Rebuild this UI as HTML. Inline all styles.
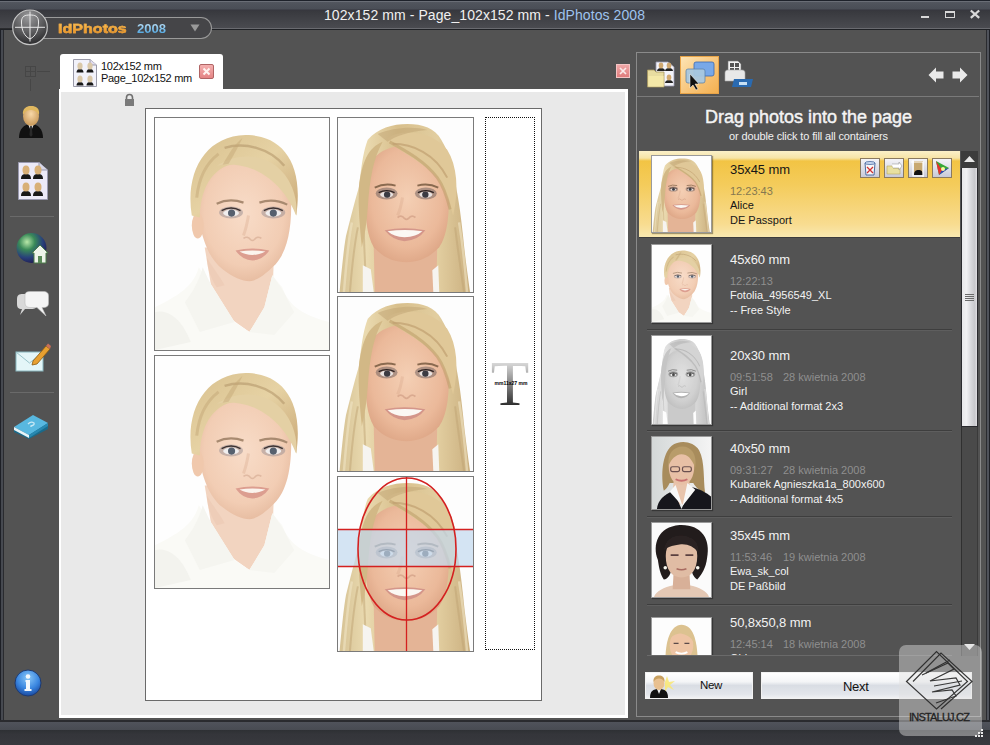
<!DOCTYPE html>
<html><head><meta charset="utf-8">
<style>
*{margin:0;padding:0;box-sizing:border-box}
html,body{width:990px;height:745px;overflow:hidden;background:#535353;font-family:"Liberation Sans",sans-serif}
.a{position:absolute}
svg{position:absolute;overflow:visible}
#title{left:0;top:0;width:990px;height:30px;background:linear-gradient(#1e222a 0,#1e222a 1px,#6a6e76 1px,#6a6e76 2px,#52565e 2px,#4e525a 5px,#4a4e56 9px,#36363e 10px,#38393e 11px,#4a4b50 28px,#6a6b70 28px,#6a6b70 29px,#202226 29px,#202226 30px)}
#titleline{display:none}
#lframe{left:0;top:30px;width:4px;height:715px;background:linear-gradient(90deg,#1e2026 0,#1e2026 1px,#464950 1px,#464950 3px,#2a2b2f 3px)}
#rframe{left:986px;top:30px;width:4px;height:715px;background:linear-gradient(90deg,#2a2b2f 0,#2a2b2f 1px,#50535b 1px,#50535b 3px,#1e2026 3px)}
#status{left:0;top:720px;width:990px;height:25px;background:linear-gradient(#2a2b2f 0,#2a2b2f 2px,#50535b 2px,#4c4f57 6px,#484b52 10px,#2e3034 10px,#34353a 14px,#38393e 25px)}
.ttl{left:324px;top:7px;font-size:14px;color:#f0f0f0;white-space:nowrap;letter-spacing:0.08px}
.sep{height:1px;background:#6a6a6a}
.tabt{font-size:11px;color:#111;white-space:nowrap;letter-spacing:-0.3px;line-height:14px}
.photo{background:#fff;border:1px solid #7a7a7a;overflow:hidden}
.item{left:647px;width:305px}
.th{left:652px;width:60px;border:1px solid #9a9a9a;background:#fff;overflow:hidden;box-shadow:1px 1px 1px rgba(0,0,0,.35)}
.t1{font-size:13px;color:#f2f2f2;white-space:nowrap;letter-spacing:-0.1px}
.t2{font-size:11px;color:#8f8f8f;white-space:nowrap}
.t3{font-size:11px;color:#f2f2f2;white-space:nowrap}
.isep{left:647px;width:305px;height:1px;background:#3e3e3e;box-shadow:0 1px 0 #5e5e5e}
.btn{border:1px solid #f2f2f2;background:linear-gradient(#ffffff 0,#f4f5f7 35%,#d9dde4 50%,#e3e6eb 85%,#f0f1f3 100%);font-size:13px;color:#111;text-align:center}
</style></head>
<body>
<svg width="0" height="0" style="position:absolute;left:0;top:0">
<defs>
<linearGradient id="hairC" x1="0" y1="0" x2="1" y2="0">
<stop offset="0" stop-color="#d6c294"/><stop offset="0.2" stop-color="#eadab0"/><stop offset="0.45" stop-color="#d8bf8c"/><stop offset="0.75" stop-color="#e2cea0"/><stop offset="1" stop-color="#cbb080"/>
</linearGradient>
<radialGradient id="skinC" cx="0.5" cy="0.45" r="0.6">
<stop offset="0" stop-color="#f4cfb4"/><stop offset="0.7" stop-color="#ebb99a"/><stop offset="1" stop-color="#dca484"/>
</radialGradient>
<radialGradient id="skinA" cx="0.5" cy="0.45" r="0.6">
<stop offset="0" stop-color="#f8dcc8"/><stop offset="0.7" stop-color="#f2cdb4"/><stop offset="1" stop-color="#e4b89c"/>
</radialGradient>
<linearGradient id="hairA" x1="0" y1="0" x2="1" y2="1">
<stop offset="0" stop-color="#d8c08e"/><stop offset="0.5" stop-color="#e6d2a4"/><stop offset="1" stop-color="#c8a674"/>
</linearGradient>
<symbol id="fC" viewBox="0 0 136 175" preserveAspectRatio="none">
<rect width="136" height="175" fill="#fdfdfd"/>
<g filter="url(#soft)">
<path d="M1.6,175 C4,150 6,130 8,119 C14,95 18,80 21,70 C24,45 26,32 30,22 C40,10 55,6 70,6 C85,6 98,10 104,22 C112,35 116,50 119,70 C122,85 124,100 126,119 C128,140 131,160 133,175 Z" fill="url(#hairC)"/>
<path d="M12,175 C14,150 16,130 20,110 M118,110 C121,135 124,155 127,175 M28,175 C28,150 26,130 26,110" stroke="#c0a474" stroke-width="2" fill="none" opacity="0.5"/><path d="M6,175 C8,150 10,125 14,105 M130,175 C128,150 126,130 122,105" stroke="#f0e4c4" stroke-width="2.5" fill="none" opacity="0.6"/>
<path d="M36,128 L100,128 L99,175 L37,175 Z" fill="#e4b496"/>
<path d="M25,148 L33,152 L36,175 L25,175 Z" fill="#f6f4f0"/>
<path d="M101,148 L95,153 L96,175 L102,175 Z" fill="#f6f4f0"/>
<path d="M27,70 C27,40 45,28 69,28 C95,28 112,42 112,72 C112,100 110,118 102,130 C92,141 80,145 69,145 C57,145 46,141 36,130 C29,118 27,100 27,70 Z" fill="url(#skinC)"/>
<path d="M21,70 C24,45 30,30 45,24 C36,40 32,60 30,90 C29,105 27,118 24,130 C22,110 20,90 21,70 Z" fill="#d2b886"/>
<path d="M50,20 C66,10 96,14 110,32 C120,48 122,72 116,98 C112,84 108,72 100,60 C90,48 74,40 50,24 Z" fill="#e0c898"/>
<path d="M52,24 C70,34 88,44 100,60 C106,68 110,80 113,92" stroke="#bc9c68" stroke-width="3" fill="none" opacity="0.55"/>
<path d="M40,16 C55,10 75,8 90,12 C70,14 58,18 50,24 Z" fill="#c0a474" opacity="0.5"/>
<path d="M55,26 C75,26 98,36 110,60" stroke="#c0a070" stroke-width="2" fill="none" opacity="0.7"/>
<path d="M37,70 Q47,65 58,68" stroke="#8a6a50" stroke-width="1.8" fill="none"/>
<path d="M80,68 Q91,65 101,70" stroke="#8a6a50" stroke-width="1.8" fill="none"/>
<ellipse cx="49" cy="76" rx="11" ry="6" fill="#6a5c5c" opacity="0.5"/>
<ellipse cx="88.5" cy="76" rx="11" ry="6" fill="#6a5c5c" opacity="0.5"/>
<ellipse cx="49" cy="77" rx="6.5" ry="3" fill="#e8e2e0"/>
<ellipse cx="88.5" cy="77" rx="6.5" ry="3" fill="#e8e2e0"/>
<circle cx="49.5" cy="77" r="3.2" fill="#3a3a42"/>
<circle cx="88" cy="77" r="3.2" fill="#3a3a42"/>
<path d="M41,75 Q49,71 57,75 M80.5,75 Q88.5,71 96.5,75" stroke="#2a2020" stroke-width="1.3" fill="none"/>
<path d="M65,80 Q63,92 60,98" stroke="#d09c80" stroke-width="3" fill="none" opacity="0.25"/><path d="M60,100 Q64,97 67,101 Q69,103 71,101 Q74,97 78,100" stroke="#b88068" stroke-width="1.8" fill="none" opacity="0.4"/>
<path d="M47,113 Q67,109 88,113 Q81,123 67,124 Q55,123 47,113 Z" fill="#d4968a"/>
<path d="M50,114 Q67,111.5 85,114 Q79,119.5 67,120 Q56,119.5 50,114 Z" fill="#fbf8f4"/>
</g>
</symbol>
<symbol id="fA" viewBox="0 0 175 233" preserveAspectRatio="none">
<rect width="175" height="233" fill="#fefefe"/>
<g filter="url(#soft)">
<path d="M50,130 L120,130 L118,180 L95,215 L60,190 Z" fill="#f2d4c0"/>
<path d="M44,150 C40,165 30,176 0,190 L0,233 L175,233 L175,205 C150,198 135,190 128,170 L118,158 L110,190 L95,215 L80,205 L55,165 Z" fill="#fafaf6"/>
<path d="M55,165 L48,150 C44,165 36,178 30,185 L45,215 L80,205 Z" fill="#f5f5f0"/>
<path d="M118,158 L128,172 L140,195 L120,218 L95,215 L110,190 Z" fill="#f6f6f1"/>
<path d="M0,195 C12,192 26,200 36,225 L0,233 Z" fill="#f3f3ee"/>
<path d="M42,72 C42,48 62,40 90,40 C118,40 137,52 137,88 C137,120 130,140 118,150 C108,160 100,164 95,164 C88,164 78,160 68,152 C52,140 42,110 42,72 Z" fill="url(#skinA)"/>
<path d="M52,140 C58,150 66,160 70,168 L62,170 C56,160 52,150 52,140 Z" fill="#e8c0a8" opacity="0.35"/>
<ellipse cx="43" cy="108" rx="6" ry="13" fill="#f0c8ac"/>
<path d="M37,98 C30,55 50,18 91,17 C128,17 150,45 142,98 C138,78 128,60 112,50 C100,42 80,44 68,50 C55,58 46,72 45,100 Z" fill="url(#hairA)"/>
<path d="M62,48 C90,30 125,38 138,70 C142,80 143,90 142,98 C135,80 122,62 100,52 C85,46 72,46 62,48 Z" fill="#e4d0a4"/>
<path d="M70,30 C90,24 115,30 130,48" stroke="#b09468" stroke-width="2.5" fill="none" opacity="0.55"/>
<path d="M42,80 C44,60 52,45 64,36" stroke="#c4a878" stroke-width="3" fill="none" opacity="0.5"/>
<path d="M88,20 C80,26 74,36 68,47 L74,46 C80,36 84,28 88,20 Z" fill="#c4a676" opacity="0.45"/>
<path d="M62,86 Q75,80 89,85" stroke="#a88a70" stroke-width="2.2" fill="none"/>
<path d="M105,85 Q119,80 133,87" stroke="#a88a70" stroke-width="2.2" fill="none"/>
<ellipse cx="76.5" cy="95" rx="12" ry="6" fill="#a09496" opacity="0.55"/>
<ellipse cx="119" cy="95" rx="12" ry="6" fill="#a09496" opacity="0.55"/>
<ellipse cx="76.5" cy="95.5" rx="8" ry="3.5" fill="#f0eeee"/>
<ellipse cx="119" cy="95.5" rx="8" ry="3.5" fill="#f0eeee"/>
<circle cx="77" cy="95.5" r="3.6" fill="#56606e"/>
<circle cx="119" cy="95.5" r="3.6" fill="#56606e"/>
<path d="M67,93 Q76.5,88 86,93 M109.5,93 Q119,88 128.5,93" stroke="#3a3030" stroke-width="1.5" fill="none"/>
<path d="M94,98 Q92,110 89,118" stroke="#dcae94" stroke-width="3" fill="none" opacity="0.4"/><path d="M89,121 Q93,118 96,122 Q98,124 100,122 Q103,118 107,121" stroke="#c89880" stroke-width="1.6" fill="none" opacity="0.45"/>
<path d="M81,133 Q98,129 115,133 Q108,143 98,143 Q88,143 81,133 Z" fill="#dc9e90"/>
<path d="M85,134 Q98,132 111,134 Q105,137.5 98,137.5 Q91,137.5 85,134 Z" fill="#fbf4ee"/>
</g>
</symbol>
<symbol id="fCg" viewBox="0 0 136 175" preserveAspectRatio="none">
<g filter="url(#gray)"><use href="#fC" width="136" height="175"/></g>
</symbol>
<filter id="soft" x="-5%" y="-5%" width="110%" height="110%"><feGaussianBlur stdDeviation="0.7"/></filter>
<filter id="gray"><feColorMatrix type="matrix" values="0.32 0.63 0.12 0 0.02  0.32 0.63 0.12 0 0.02  0.32 0.63 0.12 0 0.02  0 0 0 1 0"/></filter>
<linearGradient id="bgG" x1="0" y1="0" x2="1" y2="0"><stop offset="0" stop-color="#d4d8d8"/><stop offset="1" stop-color="#f4f4f4"/></linearGradient>
<symbol id="fG" viewBox="0 0 60 75" preserveAspectRatio="none">
<rect width="60" height="75" fill="url(#bgG)"/>
<g filter="url(#soft)">
<path d="M12,56 C9,40 10,18 20,9 C28,3 42,4 48,14 C54,26 52,44 54,58 C48,56 44,52 42,48 L18,48 C16,52 14,55 12,56 Z" fill="#a88c5c"/>
<path d="M22,46 L38,46 L40,70 L20,70 Z" fill="#e8c4ac"/>
<path d="M5,75 C6,66 12,60 22,56 L30,75 Z M60,75 L60,62 C56,58 48,54 40,52 L30,75 Z" fill="#18181c"/>
<path d="M18,57 L24,50 L31,72 Z M44,55 L36,48 L31,72 Z" fill="#f8f8f8"/>
<path d="M17,30 C17,20 22,14 30,14 C38,14 43,20 43,30 C43,42 38,50 30,50 C22,50 17,42 17,30 Z" fill="#e8c0a6"/>
<path d="M17,30 C15,18 22,10 31,10 C40,10 46,18 44,32 C40,22 36,18 30,18 C24,18 19,24 17,30 Z" fill="#b89c6a"/>
<rect x="19" y="31" width="9" height="5" rx="2" fill="none" stroke="#6a5050" stroke-width="1.2"/>
<rect x="31" y="31" width="9" height="5" rx="2" fill="none" stroke="#6a5050" stroke-width="1.2"/>
<path d="M24,44 Q30,47 36,44" stroke="#c87070" stroke-width="2" fill="none"/>
</g>
</symbol>
<symbol id="fE" viewBox="0 0 60 76" preserveAspectRatio="none">
<rect width="60" height="76" fill="#fbfbfb"/>
<g filter="url(#soft)">
<path d="M2,76 C4,70 12,66 22,64 L38,64 C48,66 56,70 58,76 Z" fill="#e4c8b4"/>
<path d="M22,50 L38,50 L39,68 L21,68 Z" fill="#d8b098"/>
<path d="M6,38 C0,22 6,4 28,2 C50,1 60,16 56,36 C55,46 50,54 46,58 C42,56 40,50 40,45 L20,45 C20,52 16,58 12,58 C8,52 7,45 6,38 Z" fill="#221c1c"/>
<path d="M14,34 C14,22 20,18 30,18 C40,18 46,22 46,34 C46,48 40,56 30,56 C20,56 14,48 14,34 Z" fill="#e0bca4"/>
<path d="M12,28 C14,16 22,12 32,13 C42,14 48,20 47,30 C42,24 36,21 28,22 C20,23 15,25 12,28 Z" fill="#2a2222"/>
<path d="M19,33 L27,33 M34,33 L42,33" stroke="#5a4040" stroke-width="1.6"/>
<path d="M25,47 Q30,49 35,47" stroke="#a86a60" stroke-width="1.6" fill="none"/>
<circle cx="13.5" cy="46" r="1.8" fill="#f8f8f0"/><circle cx="46.5" cy="46" r="1.8" fill="#f8f8f0"/>
</g>
</symbol>
<symbol id="fB" viewBox="0 0 60 83" preserveAspectRatio="none">
<rect width="60" height="83" fill="#fdfdfd"/>
<g filter="url(#soft)">
<path d="M14,60 C12,30 16,8 30,7 C44,7 48,30 46,60 Z" fill="#dcc290"/>
<ellipse cx="30" cy="28" rx="12" ry="16" fill="#eec4a4"/>
<path d="M18,22 C18,12 24,9 30,9 C38,9 42,13 42,24 C38,18 32,16 28,16 C22,17 19,20 18,22 Z" fill="#dcc290"/>
<path d="M24,35 Q30,38 36,35" stroke="#fff" stroke-width="2" fill="none"/>
<path d="M22,26 L27,26 M33,26 L38,26" stroke="#5a4a4a" stroke-width="1.5"/>
</g>
</symbol>
</defs>
</svg>
<div id="title" class="a"></div>
<div id="titleline" class="a"></div>
<div class="a ttl">102x152 mm - Page_102x152 mm - <span style="color:#9ec3ee">IdPhotos 2008</span></div>
<div id="lframe" class="a"></div>
<div id="rframe" class="a"></div>
<div id="status" class="a"></div>

<!-- logo pill -->
<div class="a" style="left:28px;top:17px;width:184px;height:22px;border:1.5px solid #9a9a9a;border-radius:0 11px 11px 0;border-left:none;background:#454548"></div>
<div class="a" style="left:0;top:28px;width:14px;height:1px;background:#2a2b2e"></div>
<div class="a" style="left:58px;top:21.5px;font-size:12px;font-weight:bold;white-space:nowrap;transform:scaleX(1.34);transform-origin:0 0;background:linear-gradient(#f8c860 0,#f0a030 60%,#e89028 100%);-webkit-background-clip:text;-webkit-text-fill-color:transparent;-webkit-text-stroke:0.4px #e8a040">IdPhotos</div>
<div class="a" style="left:136.5px;top:21.5px;font-size:12px;font-weight:bold;white-space:nowrap;transform:scaleX(1.09);transform-origin:0 0;background:linear-gradient(#c8e8fc 0,#70b8e8 60%,#3898d8 100%);-webkit-background-clip:text;-webkit-text-fill-color:transparent">2008</div>
<svg style="left:190px;top:24px" width="10" height="8"><path d="M0.5,0.5 L9.5,0.5 L5,7.5 Z" fill="#9a9a9a"/></svg>
<svg style="left:11px;top:9px" width="38" height="38" viewBox="0 0 38 38">
<defs><radialGradient id="lg" cx="0.45" cy="0.2" r="0.85"><stop offset="0" stop-color="#9a9a9c"/><stop offset="0.55" stop-color="#5a5a5c"/><stop offset="1" stop-color="#262628"/></radialGradient></defs>
<circle cx="19" cy="18.3" r="17.3" fill="url(#lg)" stroke="#c4c4c4" stroke-width="1.2"/>
<path d="M10.5,13 C10.5,7 14,6 19,6 C24,6 27.5,7 27.5,13 C27.5,21 25,27 19,30 C13,27 10.5,21 10.5,13 Z" fill="none" stroke="#e8e8e8" stroke-width="1"/>
<line x1="19" y1="2.5" x2="19" y2="32.5" stroke="#e8e8e8" stroke-width="1"/>
<line x1="4" y1="18.3" x2="34" y2="18.3" stroke="#e8e8e8" stroke-width="1"/>
</svg>
<!-- title buttons -->
<div class="a" style="left:921px;top:16px;width:8px;height:2px;background:#d8d8d8"></div>
<div class="a" style="left:945px;top:11px;width:10px;height:7px;border:1px solid #d8d8d8;border-top-width:2px"></div>
<svg style="left:969px;top:9px" width="12" height="10"><path d="M1.8,1.5 L10.2,8.8 M10.2,1.5 L1.8,8.8" stroke="#d8d8d8" stroke-width="2.3"/></svg>

<!-- left toolbar -->
<svg style="left:22px;top:62px" width="30" height="30"><g stroke="#464646" stroke-width="1" fill="none"><rect x="3.5" y="4.5" width="10" height="10"/><line x1="8.5" y1="4.5" x2="8.5" y2="14.5"/><line x1="3.5" y1="9.5" x2="13.5" y2="9.5"/><line x1="15" y1="9.5" x2="28" y2="9.5"/><line x1="8.5" y1="17" x2="8.5" y2="29"/></g></svg>
<svg style="left:18px;top:105px" width="26" height="34" viewBox="0 0 26 34">
<defs><radialGradient id="ph" cx="0.5" cy="0.4" r="0.6"><stop offset="0" stop-color="#f8d8a8"/><stop offset="1" stop-color="#c89858"/></radialGradient></defs>
<path d="M1,33 C1,24 6,19 13,19 C20,19 25,24 25,33 Z" fill="#111"/>
<path d="M10,19 L13,26 L16,19 Z" fill="#e8e8e8"/><path d="M12.2,21 L13.8,21 L14.5,30 L13,32 L11.5,30 Z" fill="#2a2a2a"/>
<ellipse cx="13" cy="11" rx="8" ry="10" fill="url(#ph)"/>
<path d="M5,10 C4,3 9,1 13,1 C18,1 22,3 21,10 C19,6 15,5 13,5 C10,5 7,6 5,10 Z" fill="#e0b860"/>
</svg>
<svg style="left:18px;top:162px" width="30" height="38" viewBox="0 0 30 38">
<path d="M0.5,0.5 L21,0.5 L29.5,8 L29.5,37.5 L0.5,37.5 Z" fill="#eceaf8" stroke="#9a9ab0"/>
<path d="M21,0.5 L21,8 L29.5,8" fill="#d8d8e8" stroke="#9a9ab0"/>
<g id="mp"><path d="M3,17 C3,13 5,12 8,12 C11,12 13,13 13,17 Z" fill="#181818"/><ellipse cx="8" cy="8" rx="3.5" ry="4.5" fill="#d8b078"/></g>
<use href="#mp" x="12"/><use href="#mp" y="17"/><use href="#mp" x="12" y="17"/>
</svg>
<div class="a" style="left:10px;top:216px;width:44px;height:1px;background:#6a6a6a"></div>
<svg style="left:16px;top:233px" width="34" height="32" viewBox="0 0 34 32">
<defs><radialGradient id="gl" cx="0.35" cy="0.3" r="0.75"><stop offset="0" stop-color="#b8e8a8"/><stop offset="0.35" stop-color="#3a8a58"/><stop offset="0.7" stop-color="#28407a"/><stop offset="1" stop-color="#201a50"/></radialGradient></defs>
<circle cx="15.5" cy="15" r="15" fill="url(#gl)"/>
<path d="M16,20 L24,12 L32,20 L30,20 L30,30 L18,30 L18,20 Z" fill="#eef4ea" stroke="#4a7a48" stroke-width="1"/>
<rect x="22" y="23" width="4" height="7" fill="#5a8a58"/>
</svg>
<svg style="left:15px;top:291px" width="34" height="27" viewBox="0 0 34 27">
<path d="M2,8 C2,4 4,3 8,3 L16,3 C20,3 22,5 22,9 L22,13 C22,17 20,18 16,18 L10,18 L5,24 L7,18 C3,18 2,16 2,13 Z" fill="#d8d8d8"/>
<path d="M10,4 C10,1.5 12,0.5 15,0.5 L28,0.5 C32,0.5 33.5,2 33.5,5 L33.5,12 C33.5,15 32,16.5 28,16.5 L27,16.5 L31,25 L22,16.5 L15,16.5 C12,16.5 10,15 10,12 Z" fill="#f4f4f4" stroke="#bcbcbc" stroke-width="0.6"/>
</svg>
<svg style="left:15px;top:343px" width="36" height="30" viewBox="0 0 36 30">
<rect x="1" y="9" width="27" height="19" fill="#e4f6f8" stroke="#8ab8c0" stroke-width="1"/>
<path d="M1,9 L14.5,20 L28,9" fill="none" stroke="#9ac4ca" stroke-width="1"/>
<path d="M18,18 L31,3 L35,6 L22,21 L17,22 Z" fill="#e8a030" stroke="#8a5a10" stroke-width="0.8"/>
<path d="M31,3 L33,0.5 L36,3 L35,6 Z" fill="#c87058"/>
</svg>
<div class="a" style="left:10px;top:392px;width:44px;height:1px;background:#6a6a6a"></div>
<svg style="left:13px;top:412px" width="36" height="28" viewBox="0 0 36 28">
<path d="M1,17 L20,6 L35,13 L35,17 L16,27 L1,20 Z" fill="#1a6a8a"/>
<path d="M1,15 L20,3 L35,11 L16,23 Z" fill="#58b8e0"/>
<path d="M1,15 L16,23 L16,26 L1,18 Z" fill="#e8f4f8"/>
<path d="M16,23 L35,11 L35,14 L16,26 Z" fill="#2888b0"/>
<path d="M15,12 Q18,9 21,11 Q22,13 18,14 L18,15" stroke="#c8e8f4" stroke-width="1.3" fill="none"/>
</svg>
<svg style="left:14px;top:669px" width="28" height="28" viewBox="0 0 28 28">
<defs><radialGradient id="ig" cx="0.5" cy="0.3" r="0.7"><stop offset="0" stop-color="#8ac8f8"/><stop offset="0.6" stop-color="#3a86e0"/><stop offset="1" stop-color="#1a4aa0"/></radialGradient></defs>
<circle cx="14" cy="14" r="13" fill="url(#ig)" stroke="#1e3a70" stroke-width="1"/>
<circle cx="14" cy="7.5" r="2.3" fill="#f4f8fc"/>
<path d="M11.5,11 L16,11 L16,20 L17.5,20 L17.5,22 L10.5,22 L10.5,20 L12,20 L12,13 L11.5,13 Z" fill="#f4f8fc"/>
</svg>


<!-- canvas -->
<div class="a" style="left:59px;top:89px;width:569px;height:629px;background:#fff"></div>
<div class="a" style="left:61px;top:92px;width:564px;height:623px;background:#e9e9e9"></div>
<!-- tab -->
<div class="a" style="left:60px;top:54px;width:163px;height:38px;background:#fff;border-radius:3px 3px 0 0"></div>
<svg style="left:73px;top:59px" width="24" height="28" viewBox="0 0 24 28">
<path d="M0.5,0.5 L17,0.5 L23.5,6 L23.5,27.5 L0.5,27.5 Z" fill="#f2f2fa" stroke="#9a9aa8"/>
<path d="M17,0.5 L17,6 L23.5,6" fill="#e0dcf0" stroke="#9a9aa8"/>
<g id="mp2"><path d="M3.5,13.5 C3.5,11 5,10 7,10 C9,10 10.5,11 10.5,13.5 Z" fill="#181818"/><ellipse cx="7" cy="7" rx="2.6" ry="3.6" fill="#dac8a8"/></g>
<use href="#mp2" x="10"/><use href="#mp2" y="13"/><use href="#mp2" x="10" y="13"/>
</svg>
<div class="a tabt" style="left:101px;top:59px">102x152 mm</div>
<div class="a tabt" style="left:101px;top:71px">Page_102x152 mm</div>
<div class="a" style="left:199px;top:64px;width:15px;height:15px;background:linear-gradient(#f4b0b0,#e48484);border:1px solid #b06464;border-radius:2px"></div>
<svg style="left:199px;top:64px" width="15" height="15"><path d="M4.5,4.5 L10.5,10.5 M10.5,4.5 L4.5,10.5" stroke="#fff4f0" stroke-width="2"/></svg>
<div class="a" style="left:616px;top:64px;width:14px;height:14px;background:linear-gradient(#f0a8a8,#e07c7c);border:1px solid #f4c4c4"></div>
<svg style="left:616px;top:64px" width="14" height="14"><path d="M4,4 L10,10 M10,4 L4,10" stroke="#fbeaea" stroke-width="1.7"/></svg>
<svg style="left:124px;top:94px" width="11" height="12" viewBox="0 0 11 12"><path d="M2.5,5 L2.5,3.5 C2.5,1 4,0.5 5.5,0.5 C7,0.5 8.5,1 8.5,3.5 L8.5,5" stroke="#707070" stroke-width="1.6" fill="none"/><rect x="1" y="5" width="9" height="7" fill="#7a7a7a"/></svg>


<!-- page -->
<div class="a" style="left:145px;top:108px;width:397px;height:593px;background:#fff;border:1px solid #6a6a6a"></div>

<div class="a photo" style="left:154px;top:117px;width:176px;height:234px"><svg style="left:0;top:0" width="174" height="232"><use href="#fA" width="174" height="232"/></svg></div>
<div class="a photo" style="left:154px;top:355px;width:176px;height:234px"><svg style="left:0;top:0" width="174" height="232"><use href="#fA" width="174" height="232"/></svg></div>
<div class="a photo" style="left:337px;top:117px;width:137px;height:176px"><svg style="left:0;top:0" width="135" height="174"><use href="#fC" width="135" height="174"/></svg></div>
<div class="a photo" style="left:337px;top:296px;width:137px;height:176px"><svg style="left:0;top:0" width="135" height="174"><use href="#fC" width="135" height="174"/></svg></div>
<div class="a photo" style="left:337px;top:476px;width:137px;height:176px"><svg style="left:0;top:0" width="135" height="174"><use href="#fC" width="135" height="174"/>
<rect x="0" y="52" width="135" height="37" fill="#c4daee" opacity="0.72"/>
<line x1="0" y1="52.5" x2="135" y2="52.5" stroke="#d42020" stroke-width="1.3"/>
<line x1="0" y1="89.5" x2="135" y2="89.5" stroke="#d42020" stroke-width="1.3"/>
<line x1="68.5" y1="0" x2="68.5" y2="174" stroke="#d42020" stroke-width="1.3"/>
<ellipse cx="69" cy="72" rx="49" ry="71" stroke="#d42020" stroke-width="1.6" fill="none"/>
</svg></div>
<div class="a" style="left:485px;top:117px;width:50px;height:533px;border:1px dotted #111;background:#fff"></div>


<!-- T text container -->
<div class="a" style="left:489px;top:354px;width:42px;text-align:center;font-family:'Liberation Serif',serif;font-size:63px;line-height:60px;color:#555;background:linear-gradient(#d8d8d8 15%,#303030 85%);-webkit-background-clip:text;-webkit-text-fill-color:transparent">T</div>
<div class="a" style="left:490px;top:380px;width:42px;text-align:center;font-size:5px;font-weight:bold;color:#000;white-space:nowrap;line-height:6px">mm11x27 mm</div>
<!-- right panel -->
<div class="a" style="left:636px;top:52px;width:345px;height:665px;border:1px solid #8a8a8a"></div>
<div class="a sep" style="left:637px;top:96px;width:342px;background:#7a7a7a"></div>
<!-- toolbar -->
<svg style="left:647px;top:61px" width="28" height="27" viewBox="0 0 28 27">
<path d="M9,1 L21,1 L27,6 L27,25 L9,25 Z" fill="#f4f4fa" stroke="#9a9ab0" stroke-width="0.8"/>
<g><path d="M10,10 C10,8 12,7 14,7 C16,7 18,8 18,10 Z" fill="#222"/><ellipse cx="14" cy="4.5" rx="2.3" ry="3" fill="#d0a870"/></g>
<g transform="translate(8,0)"><path d="M10,10 C10,8 12,7 14,7 C16,7 18,8 18,10 Z" fill="#222"/><ellipse cx="14" cy="4.5" rx="2.3" ry="3" fill="#d0a870"/></g>
<g transform="translate(8,12)"><path d="M10,10 C10,8 12,7 14,7 C16,7 18,8 18,10 Z" fill="#222"/><ellipse cx="14" cy="4.5" rx="2.3" ry="3" fill="#d0a870"/></g>
<path d="M0.5,9 L7,9 L9,11 L17,11 L17,26 L0.5,26 Z" fill="#e8dca0" stroke="#a89860" stroke-width="0.8"/>
<rect x="1.5" y="15" width="15" height="10.5" fill="#f4e8a8"/>
</svg>
<div class="a" style="left:680px;top:56px;width:39px;height:38px;background:linear-gradient(135deg,#fde4b4 0%,#f8c880 50%,#f4b050 100%);border:1px solid #e8a448"></div>
<svg style="left:684px;top:61px" width="32" height="30" viewBox="0 0 32 30">
<rect x="10" y="1" width="20" height="14" rx="2" fill="#78a8e8" stroke="#3a68b0" stroke-width="0.8"/>
<rect x="2" y="8" width="19" height="14" rx="2" fill="#a8c8e0" stroke="#5a80a8" stroke-width="0.8" opacity="0.95"/>
<path d="M6,13 L6,27 L9,24 L12,29 L14,28 L11,23 L15,23 Z" fill="#111" stroke="#fff" stroke-width="0.5"/>
</svg>
<svg style="left:724px;top:60px" width="30" height="29" viewBox="0 0 30 29">
<path d="M4,1 L14,1 L17,4 L17,14 L4,14 Z" fill="#f4f4f4" stroke="#777" stroke-width="0.6"/>
<rect x="6" y="3" width="4" height="4" fill="#555"/><rect x="11" y="3" width="4" height="4" fill="#555"/><rect x="6" y="8" width="4" height="4" fill="#555"/><rect x="11" y="8" width="4" height="4" fill="#555"/>
<path d="M1,13 C1,11 2,10 4,10 L18,10 C20,10 21,11 21,13 L21,21 L1,21 Z" fill="#e8e8e8" stroke="#aaa" stroke-width="0.6"/>
<path d="M10,19 L29,19 L27,27 L8,27 Z" fill="#2a6ab0"/>
<rect x="15" y="22" width="8" height="3" fill="#c8e0f4"/>
</svg>
<svg style="left:928px;top:67px" width="16" height="16"><path d="M0.5,8 L8,0.5 L8,4.5 L15.5,4.5 L15.5,11.5 L8,11.5 L8,15.5 Z" fill="#eaeaea"/></svg>
<svg style="left:952px;top:67px" width="16" height="16"><path d="M15.5,8 L8,0.5 L8,4.5 L0.5,4.5 L0.5,11.5 L8,11.5 L8,15.5 Z" fill="#eaeaea"/></svg>
<div class="a" style="left:637px;top:107px;width:343px;text-align:center;font-size:18px;color:#f4f4f4;-webkit-text-stroke:0.45px #f4f4f4;white-space:nowrap">Drag photos into the page</div>
<div class="a" style="left:637px;top:130px;width:343px;text-align:center;font-size:11px;color:#f0f0f0;letter-spacing:-0.13px;white-space:nowrap">or double click to fill all containers</div>

<!-- list -->
<div class="a" style="left:639px;top:151px;width:321px;height:86px;background:linear-gradient(#fbf0c8 0,#f6e4a8 7px,#f2c444 10px,#f4cc5c 40%,#f8dc90 85%,#f8e8b0 100%);box-shadow:0 1px 0 #3c3c3c"></div>
<div class="a" style="left:637px;top:149px;width:324px;height:507px;overflow:hidden">
<div class="a th" style="left:14px;top:6px;width:61px;height:78px"><svg style="left:0;top:0" width="59" height="76"><use href="#fC" width="59" height="76"/></svg></div>
<div class="a t1" style="left:93px;top:13px;color:#161616">35x45 mm</div>
<div class="a t2" style="left:93px;top:36px;color:#857850">12:23:43</div>
<div class="a t3" style="left:93px;top:50px;color:#161616">Alice</div>
<div class="a t3" style="left:93px;top:65px;color:#161616">DE Passport</div>
<div class="a th" style="left:14px;top:95px;width:61px;height:79px"><svg style="left:0;top:0" width="59" height="77"><use href="#fA" width="59" height="77"/></svg></div>
<div class="a t1" style="left:93px;top:103px;color:#f2f2f2">45x60 mm</div>
<div class="a t2" style="left:93px;top:126px;color:#8f8f8f">12:22:13</div>
<div class="a t3" style="left:93px;top:140px;color:#f2f2f2">Fotolia_4956549_XL</div>
<div class="a t3" style="left:93px;top:155px;color:#f2f2f2">-- Free Style</div>
<div class="a th" style="left:14px;top:186px;width:61px;height:90px"><svg style="left:0;top:0" width="59" height="88"><use href="#fCg" width="59" height="88"/></svg></div>
<div class="a t1" style="left:93px;top:199px;color:#f2f2f2">20x30 mm</div>
<div class="a t2" style="left:93px;top:222px;color:#8f8f8f">09:51:58</div>
<div class="a t2" style="left:146px;top:222px;color:#8f8f8f">28 kwietnia 2008</div>
<div class="a t3" style="left:93px;top:236px;color:#f2f2f2">Girl</div>
<div class="a t3" style="left:93px;top:251px;color:#f2f2f2">-- Additional format 2x3</div>
<div class="a th" style="left:14px;top:287px;width:61px;height:74px"><svg style="left:0;top:0" width="59" height="72"><use href="#fG" width="59" height="72"/></svg></div>
<div class="a t1" style="left:93px;top:292px;color:#f2f2f2">40x50 mm</div>
<div class="a t2" style="left:93px;top:315px;color:#8f8f8f">09:31:27</div>
<div class="a t2" style="left:146px;top:315px;color:#8f8f8f">28 kwietnia 2008</div>
<div class="a t3" style="left:93px;top:329px;color:#f2f2f2">Kubarek Agnieszka1a_800x600</div>
<div class="a t3" style="left:93px;top:344px;color:#f2f2f2">-- Additional format 4x5</div>
<div class="a th" style="left:14px;top:373px;width:61px;height:76px"><svg style="left:0;top:0" width="59" height="74"><use href="#fE" width="59" height="74"/></svg></div>
<div class="a t1" style="left:93px;top:379px;color:#f2f2f2">35x45 mm</div>
<div class="a t2" style="left:93px;top:402px;color:#8f8f8f">11:53:46</div>
<div class="a t2" style="left:146px;top:402px;color:#8f8f8f">19 kwietnia 2008</div>
<div class="a t3" style="left:93px;top:416px;color:#f2f2f2">Ewa_sk_col</div>
<div class="a t3" style="left:93px;top:431px;color:#f2f2f2">DE Paßbild</div>
<div class="a th" style="left:14px;top:468px;width:61px;height:83px"><svg style="left:0;top:0" width="59" height="81"><use href="#fB" width="59" height="81"/></svg></div>
<div class="a t1" style="left:93px;top:466px;color:#f2f2f2">50,8x50,8 mm</div>
<div class="a t2" style="left:93px;top:489px;color:#8f8f8f">12:45:14</div>
<div class="a t2" style="left:146px;top:489px;color:#8f8f8f">18 kwietnia 2008</div>
<div class="a t3" style="left:93px;top:503px;color:#f2f2f2">Girl</div>
<div class="a isep" style="left:10px;top:180px"></div>
<div class="a isep" style="left:10px;top:281px"></div>
<div class="a isep" style="left:10px;top:367px"></div>
<div class="a isep" style="left:10px;top:455px"></div>
</div>
<!-- scrollbar -->
<div class="a" style="left:961px;top:151px;width:17px;height:505px;background:#4a4a4a;border-left:1px solid #303030;border-right:1px solid #3a3a3a"></div>
<div class="a" style="left:961px;top:151px;width:17px;height:17px;background:#3c3c3c"></div>
<svg style="left:963px;top:155px" width="13" height="8"><path d="M1,7 L6.5,1 L12,7 Z" fill="#e8e8e8"/></svg>
<div class="a" style="left:961px;top:168px;width:17px;height:259px;background:linear-gradient(90deg,#e8e8ea 0,#f0f0f2 30%,#d8d8dc 60%,#c8c8cc 85%,#e2e0e4 100%);border:1px solid #2a2a2e;border-top:none"></div>
<div class="a" style="left:965px;top:294px;width:9px;height:8px;background:repeating-linear-gradient(#6a6a6a 0,#6a6a6a 1px,transparent 1px,transparent 2px)"></div>
<svg style="left:963px;top:643px" width="13" height="8"><path d="M1,1 L6.5,7 L12,1 Z" fill="#e8e8e8"/></svg>
<!-- action buttons -->
<div class="a" style="left:860px;top:158px;width:20px;height:20px;border:1px solid #8a7a60;background:linear-gradient(#f4f4f8,#c8cad8)"></div>
<div class="a" style="left:884px;top:158px;width:20px;height:20px;border:1px solid #8a7a60;background:linear-gradient(#f4f4f8,#c8cad8)"></div>
<div class="a" style="left:908px;top:158px;width:20px;height:20px;border:1px solid #8a7a60;background:linear-gradient(#f4f4f8,#c8cad8)"></div>
<div class="a" style="left:932px;top:158px;width:20px;height:20px;border:1px solid #8a7a60;background:linear-gradient(#f4f4f8,#c8cad8)"></div>
<svg style="left:860px;top:158px" width="20" height="20"><path d="M5,5 L15,5 L14,17 L6,17 Z" fill="#f8f8f8" stroke="#4a6aa0" stroke-width="1"/><ellipse cx="10" cy="5" rx="5" ry="1.5" fill="#c8d8f0" stroke="#4a6aa0" stroke-width="0.8"/><path d="M7,9 L13,15 M13,9 L7,15" stroke="#d03030" stroke-width="1.3"/></svg>
<svg style="left:884px;top:158px" width="20" height="20"><path d="M3,8 L8,8 L9,10 L16,10 L16,16 L3,16 Z" fill="#e8e0a0" stroke="#b8a860" stroke-width="0.6"/><path d="M8,6 L15,6 L15,4 L18,8 L15,12 L15,10 L9,10" fill="#fff" stroke="#888" stroke-width="0.5"/></svg>
<svg style="left:908px;top:158px" width="20" height="20"><rect x="6" y="3" width="9" height="14" fill="#c8a870"/><path d="M6,17 C6,13 8,12 10.5,12 C13,12 15,13 15,17 Z" fill="#111"/><path d="M5,2 L5,18 L16,18 M3,4 L15,4 L15,19" stroke="#fff" stroke-width="1.2" fill="none"/></svg>
<svg style="left:932px;top:158px" width="20" height="20"><path d="M4,3 L17,10 L7,17 Z" fill="#38a838"/><path d="M7,17 L17,10 L10,12 Z" fill="#3040c0"/><path d="M4,3 L10,12 L7,17 Z" fill="#e83030"/><circle cx="11" cy="11" r="2" fill="#f8f8a0"/></svg>


<div class="a" style="left:647px;top:655px;width:305px;height:1px;background:#6a6a6a"></div>
<div class="a btn" style="left:645px;top:672px;width:108px;height:27px"></div>
<div class="a" style="left:700px;top:679px;font-size:11.5px;color:#111;letter-spacing:-0.3px">New</div>
<svg style="left:649px;top:674px" width="28" height="24" viewBox="0 0 28 24">
<path d="M16,8 L18,2 L20,8 L26,7 L21,11 L25,16 L19,13 L16,18 Z" fill="#f8e878" opacity="0.9"/>
<path d="M1,24 C1,17 4,15 10,15 C16,15 19,17 19,24 Z" fill="#111"/>
<path d="M8,15 L10,20 L12,15 Z" fill="#eee"/>
<ellipse cx="10" cy="9" rx="5.5" ry="7" fill="#e8c090"/>
<path d="M4.5,8 C4,3 7,1.5 10,1.5 C13,1.5 16,3 15.5,8 C14,5 12,4.5 10,4.5 C8,4.5 6,5 4.5,8 Z" fill="#c8a060"/>
</svg>
<div class="a btn" style="left:761px;top:672px;width:211px;height:27px"></div>
<div class="a" style="left:843px;top:679px;font-size:13px;color:#111;letter-spacing:-0.3px">Next</div>

<div class="a" style="left:899px;top:645px;width:83px;height:91px;border-radius:7px;background:rgba(225,225,225,0.45)"></div>
<svg style="left:900px;top:648px" width="80" height="64" viewBox="0 0 80 64">
<g fill="none" stroke="#262626" stroke-width="1.2" opacity="0.9">
<path d="M6.5,33.5 L36.5,3.5 L67.5,33.5 L36.5,61 Z"/>
<path d="M13,33.5 L41,5 L72,33.5 L41,61"/>
<path d="M22,27 L48,15 L54,21 L30,33 L56,30 L60,37 L32,44 L52,42 L56,48 L36,55"/>
<path d="M26,25 L50,12 M34,38 L62,33"/>
</g>
</svg>
<div class="a" style="left:909px;top:711px;font-size:11px;color:#222;letter-spacing:-0.8px;-webkit-text-stroke:0.3px #222;white-space:nowrap">INSTALUJ.CZ</div>
<svg style="left:973px;top:728px" width="12" height="12"><g fill="#e8e8e8"><rect x="8" y="1" width="2" height="2"/><rect x="5" y="4" width="2" height="2"/><rect x="8" y="4" width="2" height="2"/><rect x="2" y="7" width="2" height="2"/><rect x="5" y="7" width="2" height="2"/><rect x="8" y="7" width="2" height="2"/></g></svg>

</body></html>
